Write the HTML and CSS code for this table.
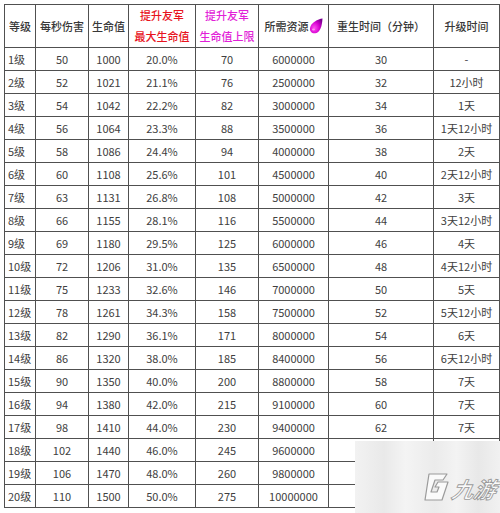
FILE: index.html
```html
<!DOCTYPE html>
<html>
<head>
<meta charset="utf-8">
<link rel="stylesheet" href="styles.css">
</head>
<body>
<div class="page">
<table class="grid">
<colgroup>
<col class="c1"><col class="c2"><col class="c3"><col class="c4"><col class="c5"><col class="c6"><col class="c7"><col class="c8">
</colgroup>
<thead>
<tr>
<th>等级</th><th>每秒伤害</th><th>生命值</th>
<th class="red">提升友军<br>最大生命值</th>
<th class="pink">提升友军<br>生命值上限</th>
<th>所需资源<svg class="gem" width="14" height="16" viewBox="0 0 14 16"><defs><radialGradient id="gemfill" cx="0.35" cy="0.65" r="0.75"><stop offset="0" stop-color="#ff4ff0"/><stop offset="0.55" stop-color="#d400d0"/><stop offset="1" stop-color="#7a0090"/></radialGradient></defs><path d="M13.5 0.5 C9 1 2 4.5 1 10 C0.5 13.5 3 15.8 6.5 15.2 C11 14.3 13 8.5 13.5 0.5 Z" fill="url(#gemfill)"/><ellipse cx="4.5" cy="11.5" rx="1.5" ry="1" fill="#ff9cf4" opacity="0.9"/></svg></th>
<th>重生时间（分钟）</th><th>升级时间</th>
</tr>
</thead>
<tbody>
<tr><td class="lv">1级</td><td>50</td><td>1000</td><td>20.0%</td><td>70</td><td>6000000</td><td>30</td><td>-</td></tr>
<tr><td class="lv">2级</td><td>52</td><td>1021</td><td>21.1%</td><td>76</td><td>2500000</td><td>32</td><td>12小时</td></tr>
<tr><td class="lv">3级</td><td>54</td><td>1042</td><td>22.2%</td><td>82</td><td>3000000</td><td>34</td><td>1天</td></tr>
<tr><td class="lv">4级</td><td>56</td><td>1064</td><td>23.3%</td><td>88</td><td>3500000</td><td>36</td><td>1天12小时</td></tr>
<tr><td class="lv">5级</td><td>58</td><td>1086</td><td>24.4%</td><td>94</td><td>4000000</td><td>38</td><td>2天</td></tr>
<tr><td class="lv">6级</td><td>60</td><td>1108</td><td>25.6%</td><td>101</td><td>4500000</td><td>40</td><td>2天12小时</td></tr>
<tr><td class="lv">7级</td><td>63</td><td>1131</td><td>26.8%</td><td>108</td><td>5000000</td><td>42</td><td>3天</td></tr>
<tr><td class="lv">8级</td><td>66</td><td>1155</td><td>28.1%</td><td>116</td><td>5500000</td><td>44</td><td>3天12小时</td></tr>
<tr><td class="lv">9级</td><td>69</td><td>1180</td><td>29.5%</td><td>125</td><td>6000000</td><td>46</td><td>4天</td></tr>
<tr><td class="lv">10级</td><td>72</td><td>1206</td><td>31.0%</td><td>135</td><td>6500000</td><td>48</td><td>4天12小时</td></tr>
<tr><td class="lv">11级</td><td>75</td><td>1233</td><td>32.6%</td><td>146</td><td>7000000</td><td>50</td><td>5天</td></tr>
<tr><td class="lv">12级</td><td>78</td><td>1261</td><td>34.3%</td><td>158</td><td>7500000</td><td>52</td><td>5天12小时</td></tr>
<tr><td class="lv">13级</td><td>82</td><td>1290</td><td>36.1%</td><td>171</td><td>8000000</td><td>54</td><td>6天</td></tr>
<tr><td class="lv">14级</td><td>86</td><td>1320</td><td>38.0%</td><td>185</td><td>8400000</td><td>56</td><td>6天12小时</td></tr>
<tr><td class="lv">15级</td><td>90</td><td>1350</td><td>40.0%</td><td>200</td><td>8800000</td><td>58</td><td>7天</td></tr>
<tr><td class="lv">16级</td><td>94</td><td>1380</td><td>42.0%</td><td>215</td><td>9100000</td><td>60</td><td>7天</td></tr>
<tr><td class="lv">17级</td><td>98</td><td>1410</td><td>44.0%</td><td>230</td><td>9400000</td><td>62</td><td>7天</td></tr>
<tr><td class="lv">18级</td><td>102</td><td>1440</td><td>46.0%</td><td>245</td><td>9600000</td><td></td><td></td></tr>
<tr><td class="lv">19级</td><td>106</td><td>1470</td><td>48.0%</td><td>260</td><td>9800000</td><td></td><td></td></tr>
<tr><td class="lv">20级</td><td>110</td><td>1500</td><td>50.0%</td><td>275</td><td>10000000</td><td></td><td></td></tr>
</tbody>
</table>
<div class="watermark">
<svg class="logo" width="80" height="40" viewBox="0 0 80 40">
<path d="M8 6 L26 6 L22 12 L14 12 L10 24 L16 24 L18 19 L14 19 L17 14 L27 14 L21 32 L4 32 Z" fill="#fafafa" stroke="#9a9a9a" stroke-width="1.2" stroke-linejoin="round"/>
<text x="30" y="30" font-family="Noto Sans CJK SC, sans-serif" font-size="22" font-weight="700" font-style="italic" fill="#fafafa" stroke="#9a9a9a" stroke-width="0.9" transform="skewX(-12) translate(6 0)">九游</text>
</svg>
</div>
</div>
</body>
</html>
```
FILE: styles.css
```css
html, body {
  margin: 0;
  padding: 0;
  background: #ffffff;
}
.page {
  position: relative;
  width: 500px;
  height: 513px;
  padding: 4px 0 0 4px;
  box-sizing: border-box;
  overflow: hidden;
}
.grid {
  border-collapse: collapse;
  table-layout: fixed;
  width: 495px;
  font-family: "Noto Sans CJK SC", "DejaVu Sans", sans-serif;
  font-size: 11px;
  color: #404040;
}
.c1 { width: 31px; }
.c2 { width: 53px; }
.c3 { width: 40px; }
.c4 { width: 67px; }
.c5 { width: 63px; }
.c6 { width: 70px; }
.c7 { width: 105px; }
.c8 { width: 66px; }
.grid th, .grid td {
  border: 1px solid #505050;
  padding: 0;
  text-align: center;
  white-space: nowrap;
  overflow: hidden;
}
.grid th {
  height: 42px;
  font-weight: 500;
  line-height: 21px;
  color: #383838;
}
.grid td {
  height: 22px;
  line-height: 22px;
}
.grid td.lv {
  text-align: left;
  padding-left: 3px;
}
.red { color: #e8141e !important; }
.pink { color: #e21fd8 !important; }
.gem {
  vertical-align: -3px;
}
.watermark {
  position: absolute;
  left: 355px;
  top: 441px;
  width: 145px;
  height: 72px;
  background: linear-gradient(90deg, #f2f2f2 0%, #e9e9e9 20%, #f4f4f4 35%, #ebebeb 55%, #f3f3f3 70%, #e8e8e8 85%, #f1f1f1 100%);
}
.logo {
  position: absolute;
  left: 66px;
  top: 27px;
}
```
